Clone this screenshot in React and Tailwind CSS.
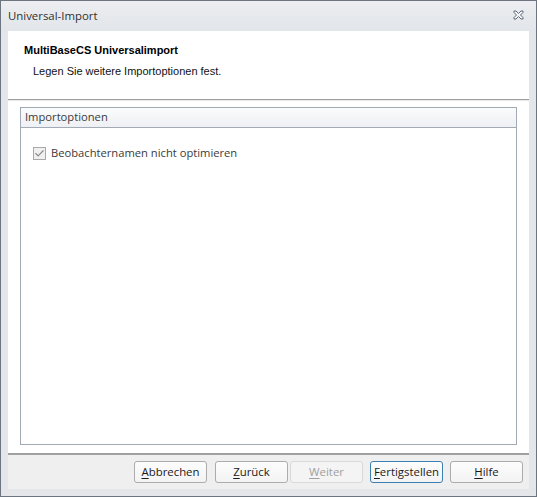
import { Check } from 'lucide-react';

const ui = { fontFamily: '"Open Sans", "Noto Sans", sans-serif' };
const tahoma = { fontFamily: '"Liberation Sans", Arial, sans-serif' };

function DlgButton({ label, hotkey, rest, disabled, primary, className = '' }) {
  return (
    <button
      className={
        'h-[22px] w-[73px] rounded-[3px] border text-[11.4px] leading-none flex items-center justify-center ' +
        (disabled
          ? 'border-[#d9d9d9] bg-[#f4f4f4] text-[#a0a0a0] '
          : primary
          ? 'border-[#3c7fb1] bg-gradient-to-b from-[#fdfdfd] to-[#f3f3f3] text-[#1a1a1a] '
          : 'border-[#acacac] bg-gradient-to-b from-[#fdfdfd] to-[#f3f3f3] text-[#1a1a1a] ') +
        className
      }
      style={ui}
    >
      <span className="underline underline-offset-2">{hotkey}</span>
      {rest}
    </button>
  );
}

export default function App() {
  return (
    <div className="w-[537px] h-[497px] border border-[#6d7580] bg-[#e4e6ea] flex flex-col" style={ui}>
      {/* title bar */}
      <div className="h-[30px] flex items-center justify-between pl-[7px] pr-[12px] bg-gradient-to-b from-[#eceef1] to-[#e2e5e9]">
        <span className="text-[11.4px] text-[#303030]">Universal-Import</span>
        <svg width="11" height="10" viewBox="0 0 11 10" className="mt-[-2px]">
          <path d="M1 1h2l2.5 2.5L8 1h2v1.5L7.5 5 10 7.5V9H8L5.5 6.5 3 9H1V7.5L3.5 5 1 2.5z" fill="#f4f5f7" stroke="#5d6778" strokeWidth="1" />
        </svg>
      </div>

      <div className="flex-1 mx-[7px] mb-[7px] flex flex-col bg-white">
        {/* header */}
        <div className="h-[68px] pl-[16px] pt-[11px]" style={tahoma}>
          <div className="text-[11px] font-bold text-black">MultiBaseCS Universalimport</div>
          <div className="text-[11px] text-[#111] pl-[9px] mt-[4px]">Legen Sie weitere Importoptionen fest.</div>
        </div>
        <div className="h-[2px] bg-[#a0a0a0] border-b border-[#e8e8e8]" />

        {/* body */}
        <div className="flex-1 px-[12px] pt-[6px] pb-[8px]">
          <div className="h-full border border-[#a2aab6] flex flex-col">
            <div className="h-[20px] flex items-center pl-[4px] border-b border-[#a2aab6] bg-gradient-to-b from-[#fafbfc] to-[#eef0f3] text-[11.2px] text-[#3a3a3a]">
              Importoptionen
            </div>
            <div className="pt-[17px] pl-[12px] flex items-center gap-[5px]">
              <div className="w-[13px] h-[13px] border border-[#a9a9a9] bg-[#f0f0f0] flex items-center justify-center">
                <Check size={11} strokeWidth={2.5} className="text-[#8a8a8a]" />
              </div>
              <span className="text-[11.2px] text-[#3a3a3a]">Beobachternamen nicht optimieren</span>
            </div>
          </div>
        </div>

        {/* footer */}
        <div className="h-[36px] bg-[#efefef] border-t-2 border-[#a0a0a0] flex items-center justify-end pr-[6px]">
          <DlgButton hotkey="A" rest="bbrechen" />
          <DlgButton hotkey="Z" rest="urück" className="ml-[8px]" />
          <DlgButton hotkey="W" rest="eiter" disabled className="ml-[2px]" />
          <DlgButton hotkey="F" rest="ertigstellen" primary className="ml-[7px]" />
          <DlgButton hotkey="H" rest="ilfe" className="ml-[7px]" />
        </div>
      </div>
    </div>
  );
}
